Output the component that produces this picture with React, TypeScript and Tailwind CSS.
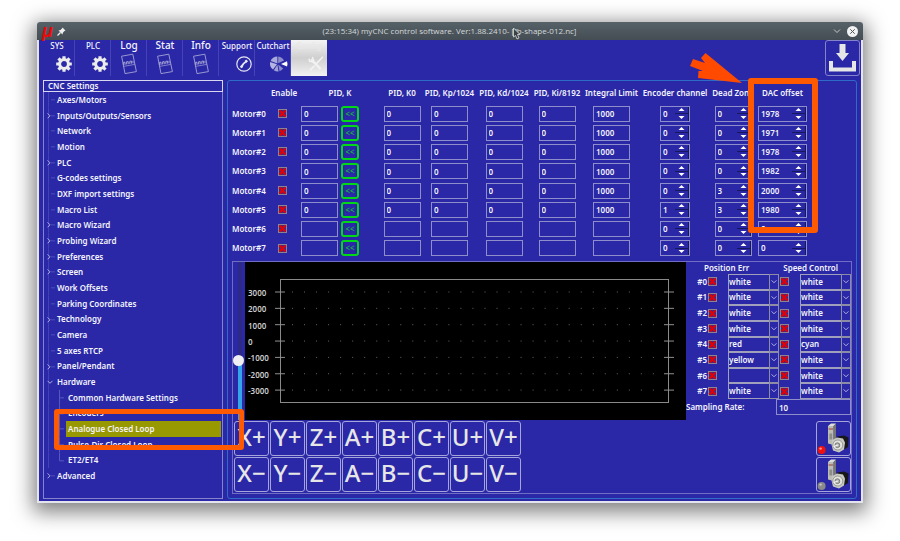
import type { ReactNode } from 'react';
import clsx from 'clsx';

interface TreeItem {
  label: string;
  kind?: 'closed' | 'open' | 'child';
  selected?: boolean;
}

interface Motor {
  pid: string;
  limit: string;
  encoder: string;
  dead: string;
  dac: string;
}

interface Trace {
  position: string;
  speed: string;
}

const TREE: TreeItem[] = [
  { label: 'Axes/Motors' },
  { label: 'Inputs/Outputs/Sensors', kind: 'closed' },
  { label: 'Network' },
  { label: 'Motion' },
  { label: 'PLC', kind: 'closed' },
  { label: 'G-codes settings' },
  { label: 'DXF import settings' },
  { label: 'Macro List' },
  { label: 'Macro Wizard', kind: 'closed' },
  { label: 'Probing Wizard', kind: 'closed' },
  { label: 'Preferences', kind: 'closed' },
  { label: 'Screen', kind: 'closed' },
  { label: 'Work Offsets' },
  { label: 'Parking Coordinates' },
  { label: 'Technology', kind: 'closed' },
  { label: 'Camera' },
  { label: '5 axes RTCP' },
  { label: 'Panel/Pendant', kind: 'closed' },
  { label: 'Hardware', kind: 'open' },
  { label: 'Common Hardware Settings', kind: 'child' },
  { label: 'Encoders', kind: 'child' },
  { label: 'Analogue Closed Loop', kind: 'child', selected: true },
  { label: 'Pulse-Dir Closed Loop', kind: 'child' },
  { label: 'ET2/ET4', kind: 'child' },
  { label: 'Advanced', kind: 'closed' },
];

const MOTORS: Motor[] = [
  { pid: '0', limit: '1000', encoder: '0', dead: '0', dac: '1978' },
  { pid: '0', limit: '1000', encoder: '0', dead: '0', dac: '1971' },
  { pid: '0', limit: '1000', encoder: '0', dead: '0', dac: '1978' },
  { pid: '0', limit: '1000', encoder: '0', dead: '0', dac: '1982' },
  { pid: '0', limit: '1000', encoder: '0', dead: '3', dac: '2000' },
  { pid: '0', limit: '1000', encoder: '1', dead: '3', dac: '1980' },
  { pid: '', limit: '', encoder: '0', dead: '0', dac: '0' },
  { pid: '', limit: '', encoder: '0', dead: '0', dac: '0' },
];

const TRACES: Trace[] = [
  { position: 'white', speed: 'white' },
  { position: 'white', speed: 'white' },
  { position: 'white', speed: 'white' },
  { position: 'white', speed: 'white' },
  { position: 'red', speed: 'cyan' },
  { position: 'yellow', speed: 'white' },
  { position: '', speed: 'white' },
  { position: 'white', speed: 'white' },
];

const COLORS = ['', 'white', 'red', 'yellow', 'cyan'];
const AXES = ['X', 'Y', 'Z', 'A', 'B', 'C', 'U', 'V'];
const TICKS = [3000, 2000, 1000, 0, -1000, -2000, -3000];

function GearIcon() {
  return (
    <svg width="16" height="16" viewBox="0 0 16 16" fill="none" stroke="#ececec">
      <circle cx="8" cy="8" r="4.4" strokeWidth="3" />
      {[0, 45, 90, 135].map(a => (
        <path key={a} d="M8 .2V3M8 13v2.8" strokeWidth="3.2" transform={`rotate(${a} 8 8)`} />
      ))}
    </svg>
  );
}

function SheetIcon() {
  return (
    <svg width="18" height="22" viewBox="0 0 18 22" fill="none" stroke="#a4a4d6">
      <path d="M1.6 3.2 12.8 1.2 16.4 18.6 5 20.6Z" strokeWidth=".9" />
      <path d="M3.4 13.4 14.8 11.4" strokeWidth=".7" />
      <path d="M3.4 12V9.4L5 9.2V11.8M6.6 11.4V8.8L8.2 8.6V11.2M9.8 10.9V8.3L11.4 8V10.6M13 10.3V7.8" strokeWidth="1" />
    </svg>
  );
}

function PhoneIcon() {
  return (
    <svg width="16" height="16" viewBox="0 0 16 16" fill="none" stroke="#e8e8f4">
      <circle cx="8" cy="8" r="7.2" strokeWidth="1.2" />
      <path d="M5.2 11.4C6 9 8.4 6.4 11 5" strokeWidth="1.5" />
      <path d="M4.6 9.8l1.9 1.6M9.4 4.2l1.8 1.9" strokeWidth="2.2" />
    </svg>
  );
}

function PieIcon() {
  return (
    <svg width="20" height="16" viewBox="0 0 20 16">
      <path d="M8.4 7.4V.4A7.3 7.3 0 0 0 1.6 5Z" fill="#a9a9dc" />
      <path d="M9.2 7.2V.4A7.3 7.3 0 0 1 15 4.6Z" fill="#8c8ccb" />
      <path d="M8 8.2 1.2 6A7.3 7.3 0 0 0 4 13.6Z" fill="#b5b5e0" />
      <path d="M8.4 8.8 4.8 14.2A7.3 7.3 0 0 0 9.6 15.4Z" fill="#a0a0d6" />
      <path d="M9.2 8.6 10.6 15.2A7.3 7.3 0 0 0 14.2 12.6Z" fill="#8c8ccb" />
      <path d="M12 8 18 5.2Q19 8 18 10.6Z" fill="#fff" />
    </svg>
  );
}

function ToolsIcon() {
  return (
    <svg width="16" height="16" viewBox="0 0 16 16" fill="none" stroke="#f2f2f2">
      <path d="M3 3.4 12.6 13" strokeWidth="2.4" />
      <path d="M1 2.6l.6 2.8 3 .4 1-1.4L4.4 1" strokeWidth="1.4" />
      <path d="M15 .8 8.4 7.6M6.6 9.6 2 14.2" strokeWidth="1.6" />
    </svg>
  );
}

function ServoIcon({ on }: { on: boolean }) {
  return (
    <svg width="33" height="33" viewBox="0 0 33 33">
      <path d="M11 4 14 1.4H19L16.6 4Z" fill="#dedede" />
      <path d="M11 4h5.6v19L11 21.6Z" fill="#bdbdb8" />
      <path d="M16.6 4 19 1.4V18L16.6 21Z" fill="#77776f" />
      <path d="M11.6 7h4.4" stroke="#a04030" />
      <path d="M12.4 11.5h2.8v6h-2.8z" fill="#8d8d88" />
      <path d="M20 14.6 27 13.4 31.6 15.4 31 25 26 28 20 24Z" fill="#17171a" />
      <path d="M15.4 18 20 15.4 26 16.6 28 20.4 27 27.4 22 30.4 16 28.6 14.6 23Z" fill="#c9c9c4" />
      <circle cx="20.8" cy="23" r="5" fill="#e4e4df" stroke="#888" strokeWidth=".8" />
      <circle cx="20.4" cy="23.2" r="2.4" fill="#b4b4b0" stroke="#666" strokeWidth=".8" />
      <path d="M16.6 24.6 21 23" stroke="#f4f4f4" strokeWidth="1.2" />
      <circle cx="4.6" cy="28" r="4" fill={on ? '#f01010' : '#8a8a8a'} />
      <circle cx="3.6" cy="26.6" r="1.2" fill={on ? '#ff9a9a' : '#c4c4c4'} />
    </svg>
  );
}

function CrossBox({ label }: { label: string }) {
  return (
    <span className="relative block size-[9px]">
      <input type="checkbox" aria-label={label} className="block size-[9px] appearance-none border border-[#8c8690] bg-[#3c2c88]" />
      <svg className="pointer-events-none absolute inset-0" width="9" height="9" viewBox="0 0 9 9">
        <path d="M1.5 1.5 7.5 7.5M7.5 1.5 1.5 7.5" stroke="#e00008" strokeWidth="2.4" />
      </svg>
    </span>
  );
}

function Field({ label, value }: { label: string; value: string }) {
  return (
    <input
      aria-label={label}
      defaultValue={value}
      className="block h-4 w-[37px] border border-[#8e8ecb] bg-transparent px-[2px] text-[8px] font-semibold outline-none"
    />
  );
}

function Spin({ label, value, width }: { label: string; value: string; width: string }) {
  return (
    <div className={clsx('flex h-4 border border-[#8e8ecb]', width)}>
      <input aria-label={label} defaultValue={value} className="min-w-0 flex-1 bg-transparent px-[2px] text-[8px] font-semibold outline-none" />
      <div className="flex w-[14px] flex-col border-r border-[#17175c]">
        <button aria-label={`${label} up`} className="flex flex-1 items-center justify-center border-b border-[#17175c]">
          <svg width="7" height="3" viewBox="0 0 7 3"><path d="M.5 3 3.5 0 6.5 3Z" fill="#fff" /></svg>
        </button>
        <button aria-label={`${label} down`} className="flex flex-1 items-center justify-center">
          <svg width="7" height="3" viewBox="0 0 7 3"><path d="M.5 0 3.5 3 6.5 0Z" fill="#fff" /></svg>
        </button>
      </div>
    </div>
  );
}

function ColorSelect({ label, value }: { label: string; value: string }) {
  return (
    <div className="relative h-full min-w-0">
      <select
        aria-label={label}
        defaultValue={value}
        className="block h-full w-full appearance-none border border-[#a0a0bc] bg-[#2a28a6] text-[8px] font-semibold outline-none"
      >
        {COLORS.map(c => <option key={c} value={c}>{c}</option>)}
      </select>
      <svg className="pointer-events-none absolute inset-y-0 right-0 h-full w-[10px] border border-[#8c8ca4]" viewBox="0 0 8 14">
        <path d="M1.5 5.5 4 8 6.5 5.5" fill="none" stroke="#b4b4e0" />
      </svg>
    </div>
  );
}

function ToolButton({ label, small, children }: { label: string; small?: boolean; children: ReactNode }) {
  return (
    <button className="flex h-9 w-9 flex-col items-center border-r border-[#4644b4] pl-px">
      <span className={clsx('h-3 whitespace-nowrap font-medium leading-[11px]', small ? 'text-[8px]' : 'text-[10px]')}>{label}</span>
      <span className="flex h-6 items-center">{children}</span>
    </button>
  );
}

function Plot() {
  const y = (i: number) => 30 + i * 16.35;
  return (
    <svg className="h-[158px] min-w-0 flex-1 bg-black" viewBox="0 0 441 158">
      <rect x="35.5" y="17.5" width="388" height="123" fill="none" stroke="#8a8a8a" />
      {TICKS.map((t, i) => (
        <g key={t}>
          <text x="3" y={y(i) + 4} fill="#cccccc" fontSize="8" fontWeight="600">{t}</text>
          <path d={`M30 ${y(i)}h10M419 ${y(i)}h10`} stroke="#909090" />
          <path d={`M47 ${y(i)}H418`} stroke="#666" strokeDasharray="1 11.03" />
        </g>
      ))}
    </svg>
  );
}

function Tree() {
  return (
    <nav className="w-[180px] shrink-0 border border-[#8583cc]">
      <div className="-mx-px -mt-px flex h-3 items-center border border-[#d8d8f2] pl-1">CNC Settings</div>
      <ul className="grid h-[392px] auto-rows-fr">
        {TREE.map(item => (
          <li key={item.label} className="flex items-center pl-[3px]">
            <svg width="9" height="16" viewBox="0 0 9 16" className="h-full shrink-0" fill="none">
              {item.label !== 'Advanced' && <path d="M1.5 0V16" stroke="#4745b8" />}
              {item.kind !== 'child' && item.kind !== 'open' && <path d="M4 8H8" stroke="#5250bc" />}
              {item.kind === 'closed' && <path d="M.5 5.5 3 8 .5 10.5" stroke="#b0b0e4" />}
              {item.kind === 'open' && <path d="M.5 7 3 9.5 5.5 7" stroke="#b0b0e4" />}
            </svg>
            {item.kind === 'child' && (
              <svg width="9" height="16" viewBox="0 0 9 16" className="ml-px h-full shrink-0" fill="none" stroke="#5c5ac0">
                <path d={item.label === 'ET2/ET4' ? 'M2.5 0V8H7' : 'M2.5 0V16M2.5 8H7'} />
              </svg>
            )}
            <a
              href="#"
              className={clsx(
                'flex h-full items-center whitespace-nowrap',
                item.kind === 'child' ? 'mr-px flex-1 pl-[2px]' : 'pl-px',
                item.selected && 'bg-[#989800]',
              )}
            >
              {item.label}
            </a>
          </li>
        ))}
      </ul>
    </nav>
  );
}

function MotorTable() {
  return (
    <table className="w-full table-fixed">
      <colgroup>
        <col className="w-[38px]" />
        <col className="w-[28px]" />
        <col className="w-[84px]" />
        <col className="w-[40px]" />
        <col className="w-[55px]" />
        <col className="w-[54px]" />
        <col className="w-[52px]" />
        <col className="w-[57px]" />
        <col className="w-[70px]" />
        <col className="w-[46px]" />
        <col className="w-[53px]" />
        <col />
      </colgroup>
      <thead>
        <tr className="h-[23px] whitespace-nowrap">
          <td />
          {['Enable', 'PID, K', 'PID, K0', 'PID, Kp/1024', 'PID, Kd/1024', 'PID, Ki/8192', 'Integral Limit', 'Encoder channel', 'Dead Zone', 'DAC offset'].map(h => (
            <th key={h} className="p-0 font-semibold"><span className="flex justify-center">{h}</span></th>
          ))}
          <td />
        </tr>
      </thead>
      <tbody className="[&_td]:p-0">
        {MOTORS.map((m, i) => (
          <tr key={i} className="h-[19px] nth-4:h-5 nth-8:h-5">
            <th className="p-0 text-left font-semibold">Motor#{i}</th>
            <td><div className="pl-2"><CrossBox label={`Enable motor ${i}`} /></div></td>
            <td>
              <div className="flex gap-[3px] pl-[3px]">
                <Field label={`Motor ${i} K`} value={m.pid} />
                <button className="h-4 w-[18px] rounded-[3px] border-2 border-[#00d818] text-[8px] leading-none text-[#14b83c]">&lt;&lt;</button>
              </div>
            </td>
            {['K0', 'Kp', 'Kd', 'Ki'].map(k => (
              <td key={k}><div className="flex justify-center"><Field label={`Motor ${i} ${k}`} value={m.pid} /></div></td>
            ))}
            <td><div className="flex justify-center"><Field label={`Motor ${i} integral limit`} value={m.limit} /></div></td>
            <td><div className="flex justify-center"><Spin label={`Motor ${i} encoder`} value={m.encoder} width="w-[30px]" /></div></td>
            <td><div className="flex justify-center"><Spin label={`Motor ${i} dead zone`} value={m.dead} width="w-[37px]" /></div></td>
            <td><div className="flex justify-center"><Spin label={`Motor ${i} DAC offset`} value={m.dac} width="w-[49px]" /></div></td>
            <td />
          </tr>
        ))}
      </tbody>
    </table>
  );
}

function TracePanel() {
  return (
    <div className="w-[165px] shrink-0">
      <div className="flex h-3 items-center justify-between pl-[18px] pr-[13px] leading-3">
        <span>Position Err</span>
        <span>Speed Control</span>
      </div>
      <div className="grid h-[125px] auto-rows-fr">
        {TRACES.map((t, i) => (
          <div key={i} className="grid grid-cols-[22px_20px_51px_21px_51px] items-center">
            <span className="pr-px text-right">#{i}</span>
            <CrossBox label={`Position trace ${i}`} />
            <ColorSelect label={`Position color ${i}`} value={t.position} />
            <span className="pl-px"><CrossBox label={`Speed trace ${i}`} /></span>
            <ColorSelect label={`Speed color ${i}`} value={t.speed} />
          </div>
        ))}
      </div>
      <div className="flex h-4 items-center">
        <label htmlFor="rate" className="w-[90px]">Sampling Rate:</label>
        <input id="rate" defaultValue="10" className="h-4 min-w-0 flex-1 border border-[#8e8ecb] bg-transparent px-[2px] outline-none" />
      </div>
    </div>
  );
}

const jogButton = 'h-[35px] w-[35px] rounded-[3px] border border-[#a5a5dc] pb-[3px] text-center text-[24px] font-medium leading-none text-[#e6e6e6] whitespace-nowrap';

export default function App() {
  return (
    <div className="bg-white px-[37px] pb-[38px] pt-[22px] font-['Noto_Sans',sans-serif] text-[8px] font-semibold leading-3 text-[#f4f4fc]">
      <div className="relative rounded-t-[3px] shadow-[0_5px_20px_4px_rgba(0,0,0,0.5)]">
        <header className="flex h-[18px] items-center rounded-t-[3px] bg-linear-to-b from-[#566168] to-[#444d53] px-[5px]">
          <span className="w-[15px] font-['Liberation_Sans',sans-serif] text-[18px] font-bold italic leading-4 text-[#f00808]">μ</span>
          <svg width="9" height="9" viewBox="0 0 9 9">
            <path d="M5.5 .5 8.5 3.5 7.5 4 6 5.5 5.5 7.5 1.5 3.5 3.5 3 5 1.5Z" fill="#eee" />
            <path d="M3.5 5.5 .5 8.5" stroke="#eee" strokeWidth="1.2" />
          </svg>
          <h1 className="flex-1 text-center font-['Open_Sans',sans-serif] font-normal text-[#d4d8da]">(23:15:34) myCNC control software. Ver:1.88.2410- [fb-shape-012.nc]</h1>
          <button aria-label="Minimize" className="mr-[6px]">
            <svg width="8" height="6" viewBox="0 0 8 6"><path d="M1 1.5 4 4.5 7 1.5" fill="none" stroke="#c4c8ca" /></svg>
          </button>
          <button aria-label="Close">
            <svg width="11" height="11" viewBox="0 0 11 11">
              <circle cx="5.5" cy="5.5" r="5.5" fill="#f2f2f2" />
              <path d="M3.3 3.3 7.7 7.7M7.7 3.3 3.3 7.7" stroke="#4b555b" />
            </svg>
          </button>
        </header>

        <main className="border-x-2 border-b-2 border-[#e4e4ee] bg-[#2a28a6] pb-[2px]">
          <div className="flex">
            <ToolButton label="SYS" small><span className="pl-[14px]"><GearIcon /></span></ToolButton>
            <ToolButton label="PLC" small><span className="pl-[14px]"><GearIcon /></span></ToolButton>
            <ToolButton label="Log"><SheetIcon /></ToolButton>
            <ToolButton label="Stat"><SheetIcon /></ToolButton>
            <ToolButton label="Info"><SheetIcon /></ToolButton>
            <ToolButton label="Support" small><span className="pl-[14px]"><PhoneIcon /></span></ToolButton>
            <ToolButton label="Cutchart" small><span className="pl-[12px]"><PieIcon /></span></ToolButton>
            <button className="flex h-9 w-9 flex-col items-center bg-linear-to-b from-[#f4f4f4] via-[#cfcfcf] to-[#f2f2f2]">
              <span className="h-3 text-[8px] font-medium leading-[11px] text-[#e8e8e8]">Config</span>
              <span className="flex h-6 items-center pl-[14px]"><ToolsIcon /></span>
            </button>
            <button aria-label="Save" className="ml-auto mr-px flex h-9 w-[35px] items-center justify-center rounded-[3px] border border-[#8583cc]">
              <svg width="29" height="30" viewBox="0 0 29 30">
                <path d="M11.5 1h6v9h3.5l-6.5 8-6.5-8h3.5Z" fill="#e6e6e6" />
                <path d="M3 18v8.5h23V18" fill="none" stroke="#e6e6e6" strokeWidth="4" />
              </svg>
            </button>
          </div>

          <div className="flex gap-1 px-1 pt-1">
            <Tree />
            <section className="min-w-0 flex-1 rounded-[3px] border border-[#2f6cc8] px-1 pb-1">
              <MotorTable />
              <div className="mt-[3px] border border-[#6f6dc4] pb-px">
                <div className="flex">
                  <div className="flex w-3 shrink-0 justify-center pl-px">
                    <input
                      type="range"
                      aria-label="Plot scale"
                      defaultValue={37}
                      className="h-[158px] w-1 appearance-none bg-linear-to-b from-[#2c2a86] from-62% to-[#36a4ea] to-62% [direction:rtl] [writing-mode:vertical-lr] [&::-webkit-slider-thumb]:-ml-[3px] [&::-webkit-slider-thumb]:size-[11px] [&::-webkit-slider-thumb]:appearance-none [&::-webkit-slider-thumb]:rounded-full [&::-webkit-slider-thumb]:bg-[#efeff4]"
                    />
                  </div>
                  <Plot />
                  <TracePanel />
                </div>
                <div className="flex justify-between pl-px pt-px">
                  <div className="grid grid-cols-8 gap-px">
                    {AXES.map(a => <button key={`${a}+`} className={jogButton}>{a}+</button>)}
                    {AXES.map(a => <button key={`${a}-`} className={jogButton}>{a}−</button>)}
                  </div>
                  <div className="grid gap-px">
                    <button aria-label="Servo on" className="h-[35px] w-[35px] rounded-[3px] border border-[#a5a5dc]"><ServoIcon on /></button>
                    <button aria-label="Servo off" className="h-[35px] w-[35px] rounded-[3px] border border-[#a5a5dc]"><ServoIcon on={false} /></button>
                  </div>
                </div>
              </div>
            </section>
          </div>
        </main>

        {/* callouts drawn over the window */}
        <div className="pointer-events-none absolute left-[711px] top-[56px] h-[155px] w-[70px] rounded-[3px] border-6 border-[#ff5a00]" />
        <div className="pointer-events-none absolute left-[17px] top-[387px] h-[41px] w-[190px] rounded-[3px] border-5 border-[#ff5a00]" />
        <svg className="pointer-events-none absolute left-[652px] top-[30px]" width="56" height="34" viewBox="0 0 56 34">
          <path d="M4 7 1 14 14 19H9.5L9 26 53 31 16.5 1 12 6 16 11Z" fill="#ff4a00" />
        </svg>
        <svg className="pointer-events-none absolute left-[475px] top-[5px]" width="9" height="13" viewBox="0 0 9 13">
          <path d="M1.5 1V10L3.5 8.5 5 12 7 11 5.5 7.5H8Z" fill="#3a4248" stroke="#e0e0e0" strokeWidth=".8" />
        </svg>
      </div>
    </div>
  );
}
